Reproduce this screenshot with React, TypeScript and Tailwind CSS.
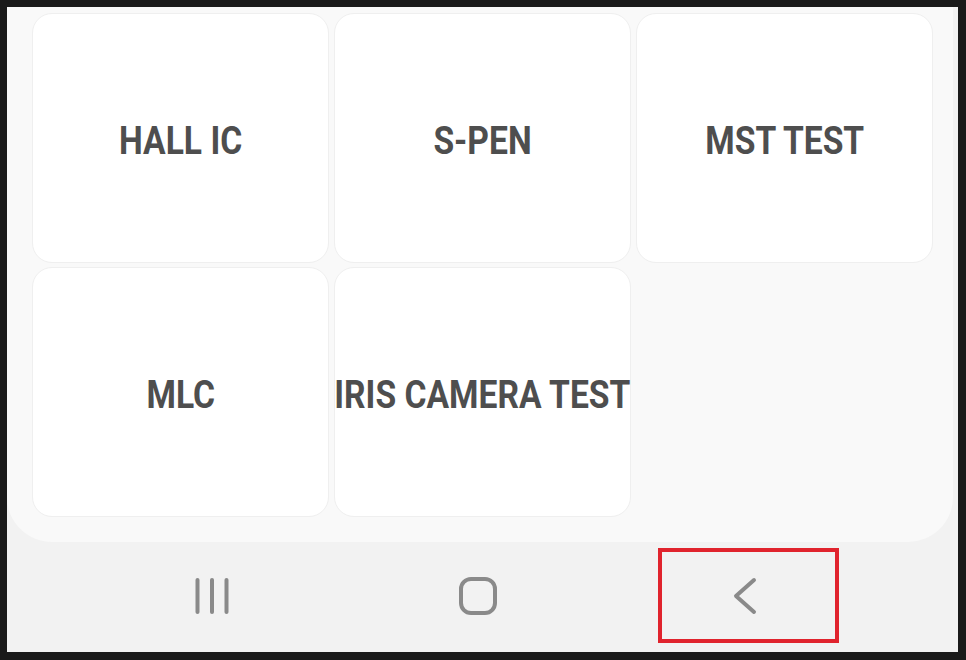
import React from "react";

const items = ["HALL IC", "S-PEN", "MST TEST", "MLC", "IRIS CAMERA TEST"];

function Card({ label }: { label: string }) {
  return (
    <div className="flex h-[250px] w-[297px] items-center justify-center overflow-visible rounded-[20px] border border-[#efefef] bg-white">
      <span
        className="inline-block origin-center translate-y-[3px] scale-x-[0.885] whitespace-nowrap text-[38px] font-bold leading-none text-[#4e4e4e]"
        style={{ fontFamily: "Roboto, 'Liberation Sans', sans-serif" }}
      >
        {label}
      </span>
    </div>
  );
}

export default function App() {
  return (
    <div className="h-[660px] w-[966px] bg-[#1a1a1a] pb-[8px] pl-[7px] pr-[8px] pt-[7px]">
      <div className="flex h-full w-full flex-col bg-[#f2f2f2]">
        <div className="mr-[5px] h-[535px] rounded-b-[45px] bg-[#f9f9f9] pb-[25px] pl-[25px] pr-[20px] pt-[6px]">
          <div className="grid grid-cols-[297px_297px_297px] gap-x-[5px] gap-y-[4px]">
            {items.map((l) => (
              <Card key={l} label={l} />
            ))}
          </div>
        </div>
        <div className="flex h-[110px] items-center pb-[3px] pl-[72px]">
          <div className="flex w-[266px] justify-center">
            <svg width="40" height="40" viewBox="0 0 40 40" fill="none">
              <g stroke="#8a8a8a" strokeWidth="4" strokeLinecap="round">
                <line x1="5.5" y1="4" x2="5.5" y2="36" />
                <line x1="20" y1="4" x2="20" y2="36" />
                <line x1="34.5" y1="4" x2="34.5" y2="36" />
              </g>
            </svg>
          </div>
          <div className="flex w-[266px] justify-center">
            <svg width="40" height="40" viewBox="0 0 40 40" fill="none">
              <rect x="3" y="3" width="34" height="34" rx="10" stroke="#8a8a8a" strokeWidth="4" />
            </svg>
          </div>
          <div className="flex w-[266px] justify-center">
            <div className="ml-[8px] flex h-[95px] w-[181px] items-center justify-center border-[4px] border-[#e0232d]">
              <svg width="40" height="40" viewBox="0 0 40 40" fill="none" className="mr-[6px]">
                <polyline
                  points="29,4 11,20 29,36"
                  stroke="#8a8a8a"
                  strokeWidth="4"
                  strokeLinecap="round"
                  strokeLinejoin="round"
                />
              </svg>
            </div>
          </div>
        </div>
      </div>
    </div>
  );
}
